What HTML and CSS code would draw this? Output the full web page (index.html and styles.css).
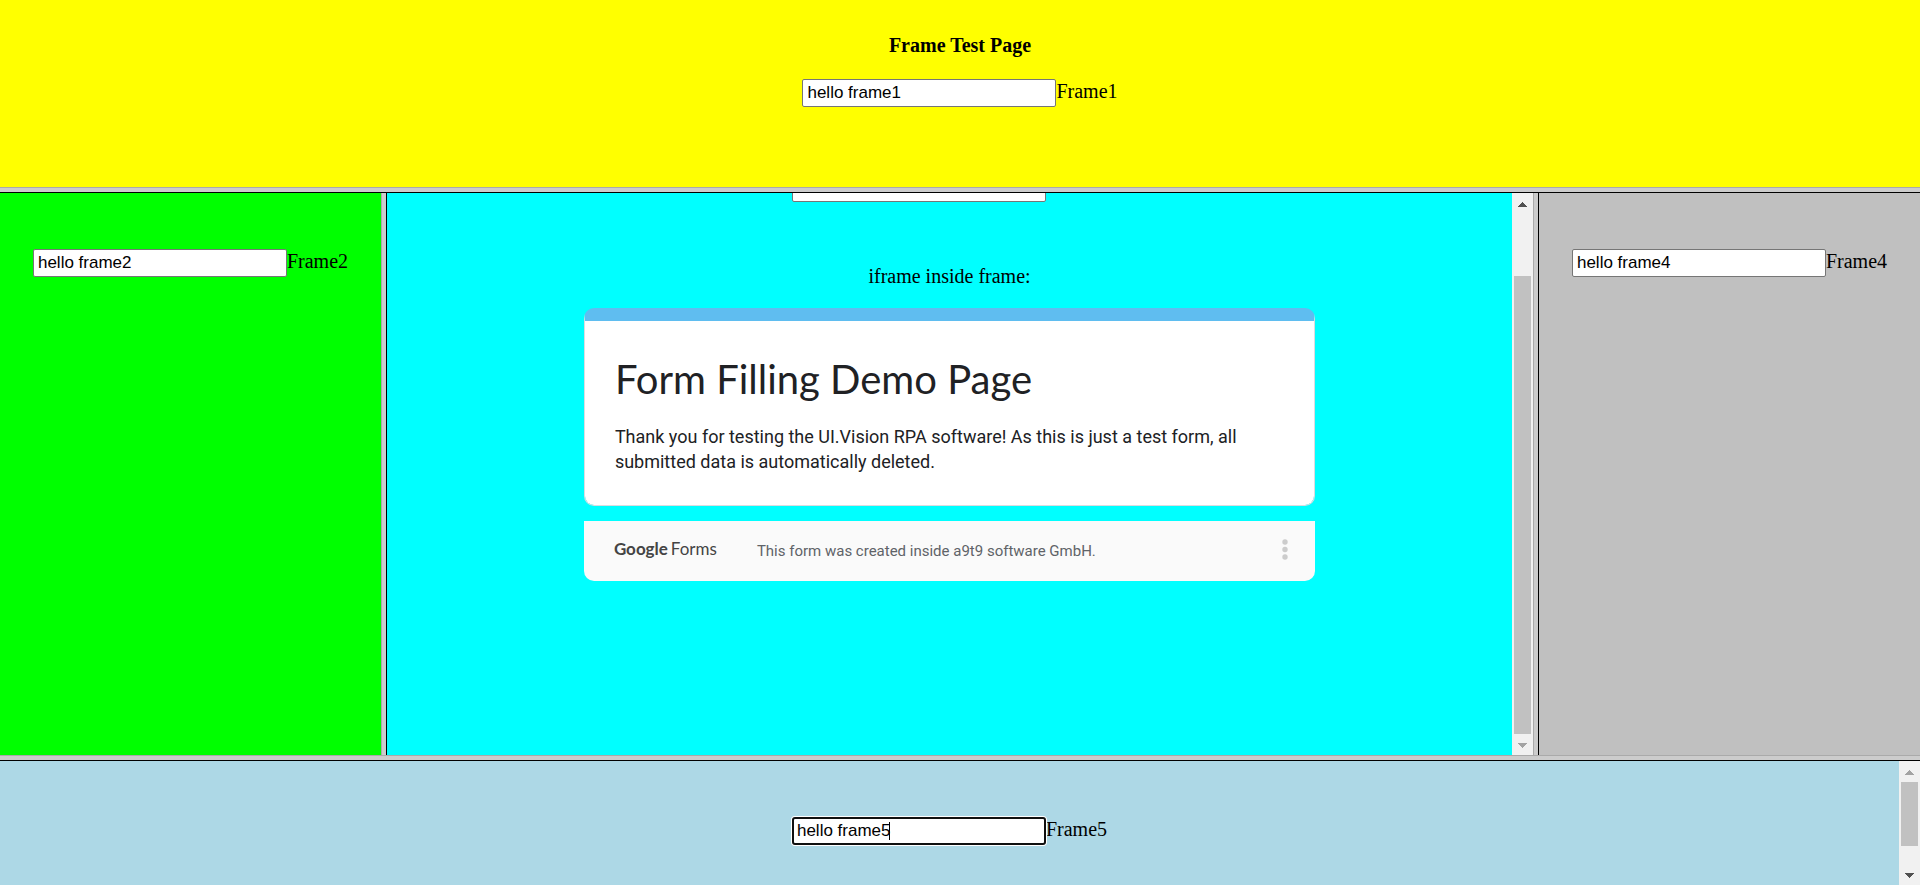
FILE: index.html
```html
<!DOCTYPE html>
<html lang="en">
<head>
<meta charset="utf-8">
<title>Frame Test Page</title>
<link rel="stylesheet" href="styles.css">
</head>
<body>
<header class="frame frame-top">
  <h4 class="heading">Frame Test Page</h4>
  <div class="field"><input class="text" id="f1" type="text" value="hello frame1"><label for="f1">Frame1</label></div>
</header>
<div class="split split-row"></div>
<div class="middle">
  <section class="frame frame-left">
    <div class="field"><input class="text" id="f2" type="text" value="hello frame2"><label for="f2">Frame2</label></div>
  </section>
  <div class="split split-col"></div>
  <main class="frame frame-center">
    <div class="content">
      <div class="scrolled">
        <input class="text" type="text" aria-label="Frame3">
      </div>
      <p class="caption">iframe inside frame:</p>
      <div class="form">
        <article class="card">
          <h1 class="title">Form Filling Demo Page</h1>
          <p class="description">Thank you for testing the UI.Vision RPA software! As this is just a test form, all submitted data is automatically deleted.</p>
        </article>
        <footer class="footer">
          <a class="logo" href="#"><span class="logo-google">Google</span><span class="logo-forms">Forms</span></a>
          <span class="note">This form was created inside a9t9 software GmbH.</span>
          <button class="more" type="button" aria-label="More options">
            <svg width="6" height="21" viewBox="0 0 6 21"><g fill="#ccc"><circle cx="3" cy="3" r="2.7"/><circle cx="3" cy="10.5" r="2.7"/><circle cx="3" cy="18" r="2.7"/></g></svg>
          </button>
        </footer>
      </div>
    </div>
    <div class="scrollbar">
      <button class="arrow" type="button" aria-label="Scroll up"><svg width="9" height="5" viewBox="0 0 9 5"><path d="M4 0h1v1h1v1h1v1h1v1h1v1H0V4h1V3h1V2h1V1h1z"/></svg></button>
      <div class="track track-center"><div class="thumb"></div></div>
      <button class="arrow arrow-off" type="button" aria-label="Scroll down"><svg width="9" height="5" viewBox="0 0 9 5"><path d="M0 0h9v1H8v1H7v1H6v1H5v1H4V4H3V3H2V2H1V1H0z"/></svg></button>
    </div>
  </main>
  <div class="split split-col"></div>
  <section class="frame frame-right">
    <div class="field"><input class="text" id="f4" type="text" value="hello frame4"><label for="f4">Frame4</label></div>
  </section>
</div>
<div class="split split-row"></div>
<section class="frame frame-bottom">
  <div class="content">
    <div class="field"><span class="active"><input class="text text-active" id="f5" type="text" value="hello frame5"><span class="caret"></span></span><label for="f5">Frame5</label></div>
  </div>
  <div class="scrollbar">
    <button class="arrow arrow-off" type="button" aria-label="Scroll up"><svg width="9" height="5" viewBox="0 0 9 5"><path d="M4 0h1v1h1v1h1v1h1v1h1v1H0V4h1V3h1V2h1V1h1z"/></svg></button>
    <div class="track track-bottom"><div class="thumb"></div></div>
    <button class="arrow" type="button" aria-label="Scroll down"><svg width="9" height="5" viewBox="0 0 9 5"><path d="M0 0h9v1H8v1H7v1H6v1H5v1H4V4H3V3H2V2H1V1H0z"/></svg></button>
  </div>
</section>
</body>
</html>
```

FILE: styles.css
```css
* {
  box-sizing: border-box;
}

body {
  margin: 0;
  height: 100vh;
  display: grid;
  grid-template-rows: minmax(0, 187fr) 6px minmax(0, 562fr) 6px minmax(0, 124fr);
  font: 20px/24px "Liberation Serif", serif;
  color: #000;
}

.frame {
  min-width: 0;
  min-height: 0;
  overflow: hidden;
}

.frame-top {
  background: #ff0;
  padding-top: 33px;
}

.heading {
  margin: 0 0 22px;
  font-size: 20px;
  text-align: center;
}

.middle {
  display: grid;
  grid-template-columns: minmax(0, 381fr) 6px minmax(0, 1146fr) 6px minmax(0, 381fr);
  min-height: 0;
}

.frame-left {
  background: #0f0;
  padding-top: 56px;
}

.frame-right {
  background: silver;
  padding-top: 56px;
}

.frame-center {
  display: flex;
  background: #0ff;
}

.frame-bottom {
  display: flex;
  background: #add8e6;
}

.frame-bottom .content {
  padding-top: 56px;
}

.content {
  flex: 1;
  min-width: 0;
}

.split {
  background: #ccc;
}

.split-row {
  border-top: 1px solid #aaa;
  border-bottom: 1px solid #000;
}

.split-col {
  border-left: 1px solid #aaa;
  border-right: 1px solid #000;
}

.field {
  display: flex;
  justify-content: center;
  align-items: baseline;
}

.text {
  flex: none;
  width: 254px;
  height: 28px;
  margin: 0;
  padding: 0 4px;
  border: 1px solid #767676;
  border-radius: 2px;
  background: #fff;
  color: #000;
  font: 17px "Liberation Sans", sans-serif;
  outline: none;
}

.active {
  position: relative;
}

.text-active {
  padding: 0 3px;
  border: 2px solid #101010;
  border-radius: 3px;
  box-shadow: 0 0 0 1px #fff;
}

.caret {
  position: absolute;
  left: 97px;
  top: 5px;
  width: 1px;
  height: 18px;
  background: #000;
}

.scrolled {
  display: flex;
  justify-content: center;
  align-items: flex-end;
  height: 9px;
  padding-right: 61px;
  overflow: hidden;
}

.caption {
  margin: 62px 0 20px;
  text-align: center;
}

.form {
  width: 65%;
  margin: 0 auto;
  font-family: Roboto, sans-serif;
}

.card {
  padding: 32px 30px 31px;
  border: 1px solid #dadce0;
  border-top: 13px solid #5fbdf0;
  border-radius: 10px;
  background: linear-gradient(#fff, #fff) padding-box;
  color: #202124;
}

.title {
  margin: 0 0 19px;
  font: 40px/52px Lato, sans-serif;
}

.description {
  margin: 0;
  font-size: 18px;
  line-height: 25px;
}

.footer {
  display: flex;
  align-items: center;
  height: 60px;
  margin-top: 15px;
  padding: 0 27px 0 30px;
  border-radius: 0 0 10px 10px;
  background: #fafafa;
}

.logo {
  display: flex;
  gap: 3px;
  padding-bottom: 4px;
  color: #444;
  font-family: Lato, sans-serif;
  font-size: 17px;
  text-decoration: none;
}

.logo-google {
  font-weight: 700;
}

.logo-forms {
  font-weight: 400;
}

.note {
  margin-left: 40px;
  color: #5f6368;
  font-size: 15px;
}

.more {
  display: flex;
  margin-left: auto;
  padding: 0 0 4px;
  border: 0;
  background: none;
}

.scrollbar {
  display: flex;
  flex-direction: column;
  width: 21px;
  background: #f1f1f1;
}

.arrow {
  display: flex;
  align-items: center;
  justify-content: center;
  height: 21px;
  padding: 2px 0 0;
  border: 0;
  background: none;
  fill: #505050;
}

.arrow-off {
  fill: #a3a3a3;
}

.track {
  display: flex;
  flex-direction: column;
  flex: 1;
  padding: 0 2px;
}

.track-center {
  justify-content: flex-end;
}

.track-center .thumb {
  height: 88%;
}

.track-bottom .thumb {
  height: 78%;
}

.thumb {
  background: #c1c1c1;
}
```
